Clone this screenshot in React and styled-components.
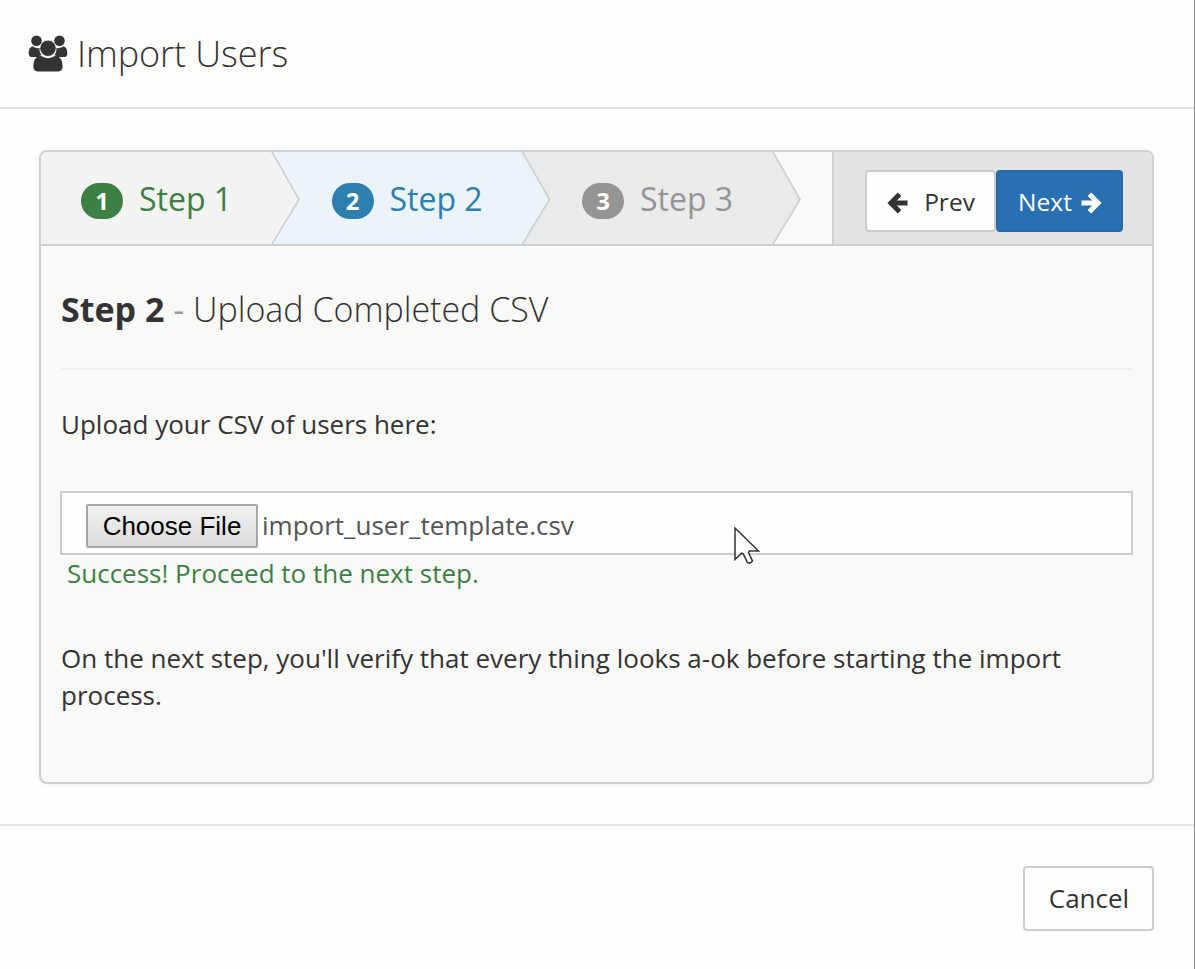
import React from "react";
import styled, { createGlobalStyle } from "styled-components";

const GlobalStyle = createGlobalStyle`
  * { box-sizing: border-box; }
  body { margin: 0; background: #fefefd; }
`;

const Modal = styled.div`
  display: flex;
  flex-direction: column;
  width: 1195px;
  height: 969px;
  overflow: hidden;
  background: #fefefd;
  border-right: 1px solid #929292;
  color: #333;
  font: 26px/37px "Open Sans", sans-serif;
`;

const Header = styled.header`
  display: flex;
  align-items: center;
  height: 109px;
  padding: 1px 28px 0;
  gap: 9px;
  border-bottom: 2px solid #e4e4e4;
`;

const Title = styled.h1`
  margin: 0;
  font-size: 36px;
  font-weight: 300;
  line-height: 50px;
  letter-spacing: -0.08px;
`;

const Main = styled.main`
  height: 715px;
  padding: 41px 40px 41px 39px;
`;

const Wizard = styled.section`
  display: flex;
  flex-direction: column;
  height: 634px;
  overflow: hidden;
  border: 2px solid #d0d0d0;
  border-radius: 8px;
  background: #f9f9f8;
  box-shadow: 0 1px 5px rgba(0, 0, 0, 0.06);
`;

const StepBar = styled.div`
  display: flex;
  height: 94px;
  border-bottom: 2px solid #d0d0d0;
  background: #fafaf9;
`;

const Steps = styled.ol`
  display: flex;
  flex: 1;
  margin: 0;
  padding: 0;
  list-style: none;
`;

const arrowShape =
  "polygon(0 0, calc(100% - 27px) 0, 100% 51.5%, calc(100% - 27px) 100%, 0 100%)";

const StepItem = styled.li`
  position: relative;
  z-index: ${(p) => p.$layer};
  display: flex;
  align-items: center;
  gap: 16px;
  width: ${(p) => (p.$first ? 259 : 277.5)}px;
  margin-left: ${(p) => (p.$first ? 0 : -27)}px;
  padding-left: ${(p) => (p.$first ? 40 : 58.5)}px;
  color: ${(p) => p.$color};
  background: #d0d0d0;
  clip-path: ${arrowShape};

  &::before {
    content: "";
    position: absolute;
    inset: 0 2px 0 0;
    z-index: -1;
    background: ${(p) => p.$fill};
    clip-path: ${arrowShape};
  }
`;

const Badge = styled.span`
  width: 42px;
  height: 36px;
  margin-top: 5px;
  border-radius: 18px;
  background: ${(p) => p.$color};
  color: #fff;
  font-size: 24px;
  font-weight: 700;
  line-height: 36px;
  text-align: center;
`;

const StepLabel = styled.span`
  padding-top: 2px;
  font-size: 32px;
  line-height: 44px;
`;

const Actions = styled.div`
  display: flex;
  width: 320px;
  padding: 18px 0 0 31px;
  border-left: 2px solid #d0d0d0;
  background: #e4e4e3;
`;

const Button = styled.button`
  display: flex;
  align-items: center;
  justify-content: center;
  width: ${(p) => p.$width}px;
  height: ${(p) => p.$height}px;
  gap: ${(p) => p.$gap || 0}px;
  padding: 0 0 0 1px;
  border: 2px solid ${(p) => (p.$primary ? "#2a69a9" : "#ccc")};
  border-radius: 4px;
  background: ${(p) => (p.$primary ? "#2970b3" : "#fefefe")};
  color: ${(p) => (p.$primary ? "#fff" : "#333")};
  font: ${(p) => p.$size || 26}px/37px "Open Sans", sans-serif;

  svg {
    margin-top: 4px;
  }
`;

const Pane = styled.div`
  padding: 39px 19px 0 20px;
`;

const PaneTitle = styled.h2`
  height: 85px;
  margin: 0 0 36px;
  border-bottom: 2px solid #efefee;
  font-size: 34px;
  font-weight: 300;
  line-height: 48px;
`;

const Strong = styled.strong`
  font-weight: 700;
`;

const Dash = styled.span`
  color: #999;
  font-weight: 400;
`;

const Text = styled.p`
  margin: 0;
`;

const FileField = styled.div`
  display: flex;
  align-items: center;
  height: 64px;
  width: 1073px;
  margin: 48px 0 0 -1px;
  padding: 6px 0 0 24px;
  gap: 4px;
  border: 2px solid #ccc;
  background: #fefefe;
  color: #555;
`;

const ChooseButton = styled.button`
  width: 172px;
  height: 44px;
  padding: 0;
  border: 2px solid #a6a6a6;
  border-radius: 2px;
  background: linear-gradient(#f2f2f2, #dcdcdc);
  color: #000;
  font: 26px/36px "Liberation Sans", sans-serif;
`;

const FileName = styled.span`
  margin-top: -1px;
`;

const Success = styled(Text)`
  margin-bottom: 48px;
  padding-left: 6px;
  color: #3c8045;
`;

const Footer = styled.footer`
  display: flex;
  justify-content: flex-end;
  flex: 1;
  padding: 40px 40px 0;
  border-top: 2px solid #e4e4e4;
`;

const Cursor = styled.svg`
  position: absolute;
  left: 733px;
  top: 526px;
`;

function UsersIcon() {
  return (
    <svg width="40" height="38" viewBox="0 0 40 38" fill="#333">
      <circle cx="8.5" cy="5.8" r="5.3" />
      <circle cx="31.5" cy="5.8" r="5.3" />
      <path d="M5 11.6C2 11.6.7 14.7.7 18.4c0 2.4 1.4 3.6 3.6 3.6h6c1-1 2-1.6 3.4-2-1.8-2-2.4-4.2-2.1-7-2.4.7-4.7 0-6.6-1.4Z" />
      <path d="M35 11.6c3 0 4.3 3.1 4.3 6.8 0 2.4-1.4 3.6-3.6 3.6h-6c-1-1-2-1.6-3.4-2 1.8-2 2.4-4.2 2.1-7 2.4.7 4.7 0 6.6-1.4Z" />
      <circle cx="20" cy="13.2" r="7.8" />
      <path d="M13 20.8c4.4 3.3 9.6 3.3 14 0 5.7 0 7.6 5.4 7.6 11 0 3-1.9 4.8-4.9 4.8H10.3c-3 0-4.9-1.8-4.9-4.8 0-5.6 1.9-11 7.6-11Z" />
    </svg>
  );
}

function ArrowIcon({ flip }) {
  return (
    <svg width="21" height="22" viewBox="0 0 21 22">
      <g
        transform={flip ? "matrix(-1 0 0 1 21 0)" : undefined}
        fill="none"
        stroke="currentColor"
        strokeWidth="5"
      >
        <path d="M4 11h16.5" strokeWidth="4.8" />
        <path d="M12.6 2.2 3.9 11l8.7 8.8" strokeLinejoin="miter" />
      </g>
    </svg>
  );
}

const steps = [
  { n: 1, color: "#3d8043", fill: "#f3f3f2" },
  { n: 2, color: "#2d7fb0", fill: "#ebf4f9" },
  { n: 3, color: "#959595", fill: "#ebebea" },
];

export default function App() {
  return (
    <Modal>
      <GlobalStyle />
      <Header>
        <UsersIcon />
        <Title>Import Users</Title>
      </Header>
      <Main>
        <Wizard>
          <StepBar>
            <Steps>
              {steps.map((s, i) => (
                <StepItem
                  key={s.n}
                  $first={i === 0}
                  $layer={3 - i}
                  $color={s.color}
                  $fill={s.fill}
                >
                  <Badge $color={s.color}>{s.n}</Badge>
                  <StepLabel>Step {s.n}</StepLabel>
                </StepItem>
              ))}
            </Steps>
            <Actions>
              <Button $width={131} $height={62} $gap={16} $size={24.5}>
                <ArrowIcon />
                Prev
              </Button>
              <Button $primary $width={127} $height={62} $gap={9} $size={24.5}>
                Next
                <ArrowIcon flip />
              </Button>
            </Actions>
          </StepBar>
          <Pane>
            <PaneTitle>
              <Strong>Step 2</Strong> <Dash>-</Dash> Upload Completed CSV
            </PaneTitle>
            <Text>Upload your CSV of users here:</Text>
            <FileField>
              <ChooseButton>Choose File</ChooseButton>
              <FileName>import_user_template.csv</FileName>
            </FileField>
            <Success>Success! Proceed to the next step.</Success>
            <Text>
              On the next step, you'll verify that every thing looks a-ok before
              starting the import process.
            </Text>
          </Pane>
        </Wizard>
      </Main>
      <Footer>
        <Button $width={131} $height={65}>
          Cancel
        </Button>
      </Footer>
      <Cursor width="28" height="42" viewBox="0 0 28 42">
        <path
          d="M2 2v31.5l6.5-6.3 1.8.6 4.2 8.7 2.4.6 2.6-2-4-8.5.8-1.6H25.5Z"
          fill="#fff"
          stroke="#333"
          strokeWidth="1.5"
        />
      </Cursor>
    </Modal>
  );
}
